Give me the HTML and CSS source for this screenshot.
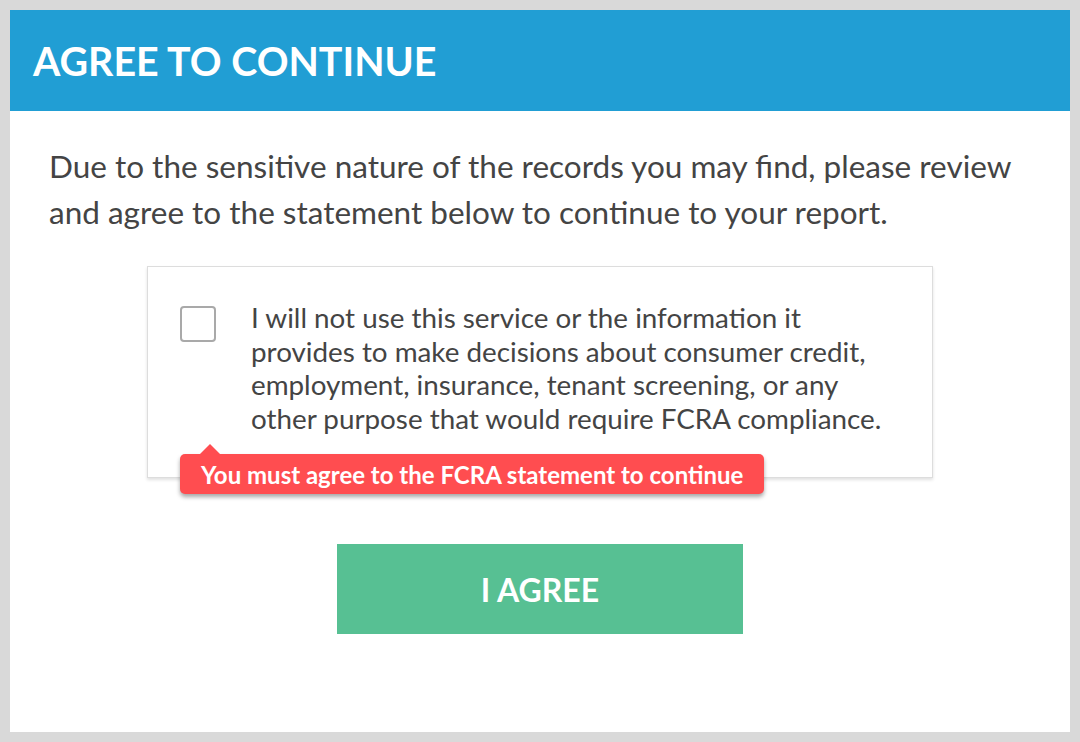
FILE: index.html
```html
<!DOCTYPE html>
<html>
<head>
<meta charset="utf-8">
<link rel="stylesheet" href="styles.css">
</head>
<body>
<div class="modal">
  <div class="modal-header"><h1 class="title">AGREE TO CONTINUE</h1></div>
  <div class="modal-body">
    <p class="intro">Due to the sensitive nature of the records you may find, please review and agree to the statement below to continue to your report.</p>
    <div class="statement">
      <span class="checkbox"></span>
      <p class="statement-text">I will not use this service or the information it provides to make decisions about consumer credit, employment, insurance, tenant screening, or any other purpose that would require FCRA compliance.</p>
      <div class="tooltip">You must agree to the FCRA statement to continue</div>
    </div>
    <div class="actions"><button class="agree-btn">I AGREE</button></div>
  </div>
</div>
</body>
</html>
```
FILE: styles.css
```css
html, body {
  margin: 0;
  padding: 0;
}
body {
  width: 1080px;
  height: 742px;
  background: #d9d9d9;
  font-family: Lato, "Open Sans", sans-serif;
  padding: 10px;
  box-sizing: border-box;
}
.modal {
  background: #fff;
  height: 722px;
}
.modal-header {
  background: #219ed4;
  height: 101px;
  display: flex;
  align-items: center;
  padding-left: 23px;
}
.title {
  margin: 0;
  color: #fff;
  font-weight: 700;
  font-size: 39.4px;
}
.modal-body {
  padding: 32px 39px 0 39px;
}
.intro {
  margin: 0;
  color: #444;
  font-size: 31.5px;
  line-height: 46px;
}
.statement {
  position: relative;
  margin: 31px 0 0 98px;
  width: 786px;
  height: 212px;
  box-sizing: border-box;
  border: 1px solid #ddd;
  box-shadow: 0 2px 3px rgba(0,0,0,0.12);
  display: flex;
  padding: 39px 37px 0 32px;
}
.checkbox {
  flex: none;
  width: 32px;
  height: 32px;
  border: 2px solid #a9a9a9;
  border-radius: 4px;
  margin-right: 35px;
}
.statement-text {
  margin: -5px 0 0 0;
  color: #444;
  font-size: 27.8px;
  line-height: 33.7px;
}
.tooltip {
  position: absolute;
  left: 32px;
  top: 187px;
  height: 40px;
  padding: 0 21px;
  display: flex;
  align-items: center;
  background: #ff4d50;
  color: #fff;
  font-weight: 700;
  font-size: 24px;
  border-radius: 5px;
  box-shadow: 0 3px 4px rgba(0,0,0,0.35);
  white-space: nowrap;
}
.tooltip::before {
  content: "";
  position: absolute;
  left: 20px;
  top: -10px;
  border-left: 10px solid transparent;
  border-right: 10px solid transparent;
  border-bottom: 10px solid #ff4d50;
}
.actions {
  display: flex;
  justify-content: center;
  margin-top: 66px;
}
.agree-btn {
  width: 406px;
  height: 90px;
  border: none;
  background: #57c093;
  color: #fff;
  font-family: Lato, sans-serif;
  font-weight: 700;
  font-size: 32px;
  padding: 0;
}
```
